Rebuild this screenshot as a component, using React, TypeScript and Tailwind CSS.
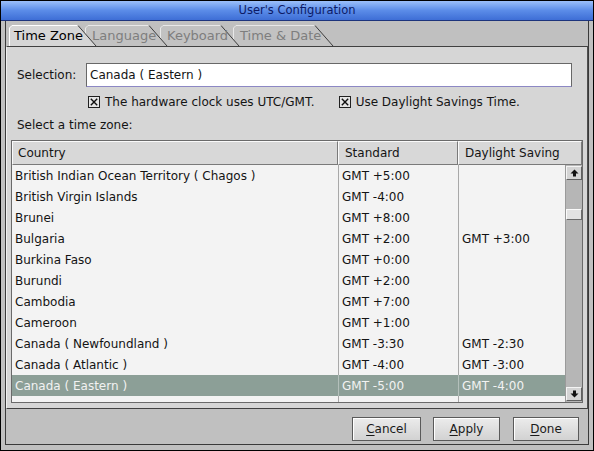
import React from "react";

const tabs = [
  { label: "Time Zone", w: 88, active: true, cls: "ml-[3px] z-50 h-[21px] pl-[5px] text-black" },
  { label: "Language", w: 83, active: false, cls: "-ml-[12px] z-40 h-[20px] mb-[1px] pl-[7px] text-[#7e7e7e]" },
  { label: "Keyboard", w: 80, active: false, cls: "-ml-[8px] z-30 h-[20px] mb-[1px] pl-[7px] text-[#7e7e7e]" },
  { label: "Time & Date", w: 101, active: false, cls: "-ml-[7px] z-20 h-[20px] mb-[1px] pl-[7px] text-[#7e7e7e]" },
];

const zones: [string, string, string][] = [
  ["British Indian Ocean Territory ( Chagos )", "GMT +5:00", ""],
  ["British Virgin Islands", "GMT -4:00", ""],
  ["Brunei", "GMT +8:00", ""],
  ["Bulgaria", "GMT +2:00", "GMT +3:00"],
  ["Burkina Faso", "GMT +0:00", ""],
  ["Burundi", "GMT +2:00", ""],
  ["Cambodia", "GMT +7:00", ""],
  ["Cameroon", "GMT +1:00", ""],
  ["Canada ( Newfoundland )", "GMT -3:30", "GMT -2:30"],
  ["Canada ( Atlantic )", "GMT -4:00", "GMT -3:00"],
  ["Canada ( Eastern )", "GMT -5:00", "GMT -4:00"],
];

function Tab({ label, w, active, cls }: { label: string; w: number; active: boolean; cls: string }) {
  const h = 21;
  return (
    <div className={`relative shrink-0 flex items-center text-[13px] ${cls}`} style={{ width: w }}>
      <svg className="absolute inset-0" width={w} height={h} viewBox={`0 0 ${w} ${h}`}>
        <polygon points={`0,${h} 0,3 3,0 ${w - 19},0 ${w - 1},${h}`} fill={active ? "#d6d6d6" : "#c2c2c2"} />
        <polyline points={`0.5,${h} 0.5,3 3,0.5 ${w - 19},0.5`} fill="none" stroke={active ? "#ffffff" : "#e8e8e8"} />
        <line x1={w - 19} y1={0.5} x2={w - 1} y2={h} stroke="#3c3c3c" />
      </svg>
      <span className="relative leading-none">{label}</span>
    </div>
  );
}

function CheckBox() {
  return (
    <svg width="12" height="12" viewBox="0 0 12 12" className="shrink-0">
      <rect x="0.5" y="0.5" width="11" height="11" fill="#e6e6e6" stroke="#202020" />
      <path d="M2.8 2.8 L9.2 9.2 M9.2 2.8 L2.8 9.2" stroke="#101010" strokeWidth="1.4" />
    </svg>
  );
}

function Arrow({ up }: { up: boolean }) {
  return (
    <div className="h-[14px] bg-[#d4d4d4] border border-t-[#f4f4f4] border-l-[#f4f4f4] border-r-[#606060] border-b-[#606060] flex items-center justify-center">
      <svg width="9" height="8" viewBox="0 0 9 8">
        {up ? (
          <path d="M4.5 0.5 L8.5 4.5 L6 4.5 L6 7.5 L3 7.5 L3 4.5 L0.5 4.5 Z" fill="#111" />
        ) : (
          <path d="M4.5 7.5 L8.5 3.5 L6 3.5 L6 0.5 L3 0.5 L3 3.5 L0.5 3.5 Z" fill="#111" />
        )}
      </svg>
    </div>
  );
}

function Btn({ label, w }: { label: string; w: string }) {
  return (
    <button className={`${w} h-[24px] bg-gradient-to-b from-[#ececec] to-[#d2d2d2] border border-[#5a5a5a] shadow-[inset_1px_1px_0_#ffffff] text-[12px] text-[#1a1a1a]`}>
      <span className="underline underline-offset-2">{label[0]}</span>
      {label.slice(1)}
    </button>
  );
}

export default function App() {
  return (
    <div className="w-[594px] h-[451px] bg-[#c0c0c0] border border-black flex flex-col font-['DejaVu_Sans',sans-serif] text-[12px] text-[#141414] overflow-hidden">
      <div className="h-[20px] shrink-0 bg-gradient-to-b from-[#9cc0fa] via-[#5b8ce8] to-[#3e6ed6] border-b border-[#1d347c] text-[#0c1a66] text-[11.5px] leading-[19px] text-center">
        User's Configuration
      </div>
      <div className="flex-1 flex flex-col px-[4px] pb-[5px]">
        <div className="flex-1 flex flex-col border border-t-0 border-[#3a3a3a]">
          <div className="h-[25px] shrink-0 flex items-end pt-[5px]">
            {tabs.map((t) => (
              <Tab key={t.label} {...t} />
            ))}
          </div>
          <div className="relative z-0 h-[363px] shrink-0 flex flex-col bg-[#d6d6d6] border-t border-t-[#404040] border-l border-l-[#f0f0f0] border-r border-r-[#505050] border-b border-b-[#404040] pt-[16px] pl-[4px] pr-[4px] pb-[5px]">
            <div className="flex items-center h-[24px]">
              <span className="w-[75px] pl-[6px]">Selection:</span>
              <div className="flex-1 h-[24px] mr-[11px] bg-white border border-[#686868] border-b-[#8c88c4] flex items-center pl-[3px]">
                Canada ( Eastern )
              </div>
            </div>
            <div className="flex items-center h-[14px] mt-[8px] pl-[77px]">
              <CheckBox />
              <span className="ml-[5px]">The hardware clock uses UTC/GMT.</span>
              <div className="ml-[24px] flex items-center">
                <CheckBox />
                <span className="ml-[5px]">Use Daylight Savings Time.</span>
              </div>
            </div>
            <div className="h-[14px] mt-[9px] pl-[6px] flex items-center">Select a time zone:</div>
            <div className="mt-[8px] h-[263px] border border-[#6a6a6a] flex flex-col">
              <div className="h-[24px] flex shrink-0">
                <div className="w-[326px] bg-[#d8d8d8] border border-t-[#fafafa] border-l-[#fafafa] border-r-[#7a7a7a] border-b-[#7a7a7a] flex items-center pl-[5px]">Country</div>
                <div className="w-[120px] bg-[#d8d8d8] border border-t-[#fafafa] border-l-[#fafafa] border-r-[#7a7a7a] border-b-[#7a7a7a] flex items-center pl-[6px]">Standard</div>
                <div className="flex-1 bg-[#d8d8d8] border border-t-[#fafafa] border-l-[#fafafa] border-r-[#7a7a7a] border-b-[#7a7a7a] flex items-center pl-[6px]">Daylight Saving</div>
              </div>
              <div className="flex-1 flex">
                <div className="w-[553px] flex flex-col bg-[#f3f3f3]">
                  {zones.map(([c, s, d], i) => {
                    const sel = i === zones.length - 1;
                    return (
                      <div key={c} className={`h-[21px] flex ${sel ? "bg-[#8c9f97] text-[#f2f2f2]" : ""}`}>
                        <div className="w-[326px] pl-[3px] flex items-center">{c}</div>
                        <div className={`w-[120px] pl-[3px] flex items-center border-l ${sel ? "border-[#b4c0bb]" : "border-[#a8a8a8]"}`}>{s}</div>
                        <div className={`flex-1 pl-[3px] flex items-center border-l ${sel ? "border-[#b4c0bb]" : "border-[#a8a8a8]"}`}>{d}</div>
                      </div>
                    );
                  })}
                  <div className="flex-1 flex">
                    <div className="w-[326px]" />
                    <div className="w-[120px] border-l border-[#a8a8a8]" />
                    <div className="flex-1 border-l border-[#a8a8a8]" />
                  </div>
                </div>
                <div className="w-[17px] bg-[#b6b6b6] border-l border-[#9a9a9a] flex flex-col pt-[1px] pb-[1px]">
                  <Arrow up />
                  <div className="mt-[29px] h-[11px] bg-[#e2e2e2] border border-t-[#fafafa] border-l-[#fafafa] border-r-[#6a6a6a] border-b-[#6a6a6a]" />
                  <div className="flex-1" />
                  <Arrow up={false} />
                </div>
              </div>
            </div>
          </div>
          <div className="flex-1 flex items-start justify-end pt-[8px] pr-[9px]">
            <Btn label="Cancel" w="w-[69px]" />
            <div className="w-[12px]" />
            <Btn label="Apply" w="w-[67px]" />
            <div className="w-[13px]" />
            <Btn label="Done" w="w-[66px]" />
          </div>
        </div>
      </div>
    </div>
  );
}
